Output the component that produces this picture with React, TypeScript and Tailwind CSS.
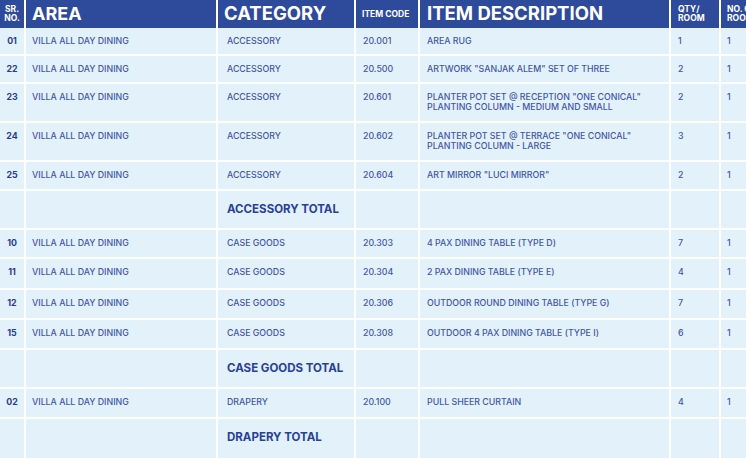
const cols = 'grid grid-cols-[24px_190px_136px_62px_249px_48px_1fr] gap-x-[2px]';

type Row = {
    sr?: string;
    area?: string;
    category?: string;
    code?: string;
    desc?: string[];
    qty?: string;
    rooms?: string;
    total?: string;
    h: string;
};

const rows: Row[] = [
    { sr: '01', area: 'VILLA ALL DAY DINING', category: 'ACCESSORY', code: '20.001', desc: ['AREA RUG'], qty: '1', rooms: '1', h: 'h-[26px]' },
    { sr: '22', area: 'VILLA ALL DAY DINING', category: 'ACCESSORY', code: '20.500', desc: ['ARTWORK "SANJAK ALEM" SET OF THREE'], qty: '2', rooms: '1', h: 'h-[26px]' },
    { sr: '23', area: 'VILLA ALL DAY DINING', category: 'ACCESSORY', code: '20.601', desc: ['PLANTER POT SET @ RECEPTION "ONE CONICAL"', 'PLANTING COLUMN - MEDIUM AND SMALL'], qty: '2', rooms: '1', h: 'h-[37px]' },
    { sr: '24', area: 'VILLA ALL DAY DINING', category: 'ACCESSORY', code: '20.602', desc: ['PLANTER POT SET @ TERRACE "ONE CONICAL"', 'PLANTING COLUMN - LARGE'], qty: '3', rooms: '1', h: 'h-[37px]' },
    { sr: '25', area: 'VILLA ALL DAY DINING', category: 'ACCESSORY', code: '20.604', desc: ['ART MIRROR "LUCI MIRROR"'], qty: '2', rooms: '1', h: 'h-[27px]' },
    { total: 'ACCESSORY TOTAL', h: 'h-[37px]' },
    { sr: '10', area: 'VILLA ALL DAY DINING', category: 'CASE GOODS', code: '20.303', desc: ['4 PAX DINING TABLE (TYPE D)'], qty: '7', rooms: '1', h: 'h-[27px]' },
    { sr: '11', area: 'VILLA ALL DAY DINING', category: 'CASE GOODS', code: '20.304', desc: ['2 PAX DINING TABLE (TYPE E)'], qty: '4', rooms: '1', h: 'h-[29px]' },
    { sr: '12', area: 'VILLA ALL DAY DINING', category: 'CASE GOODS', code: '20.306', desc: ['OUTDOOR ROUND DINING TABLE (TYPE G)'], qty: '7', rooms: '1', h: 'h-[28px]' },
    { sr: '15', area: 'VILLA ALL DAY DINING', category: 'CASE GOODS', code: '20.308', desc: ['OUTDOOR 4 PAX DINING TABLE (TYPE I)'], qty: '6', rooms: '1', h: 'h-[28px]' },
    { total: 'CASE GOODS TOTAL', h: 'h-[37px]' },
    { sr: '02', area: 'VILLA ALL DAY DINING', category: 'DRAPERY', code: '20.100', desc: ['PULL SHEER CURTAIN'], qty: '4', rooms: '1', h: 'h-[28px]' },
    { total: 'DRAPERY TOTAL', h: 'h-[40px]' }
];

const base = 'bg-[#e3f1fb] pt-[8px] text-[8.8px] leading-[10px] whitespace-nowrap overflow-hidden';
const cell = `${base} font-medium text-[#4457a6]`;

export default function App() {
    return (
        <div className="w-[746px] h-[458px] overflow-hidden bg-white font-['Inter',sans-serif]">
            <div className="w-[760px] flex flex-col gap-y-[2px]">
                {/* Header */}
                <div className={`${cols} h-[26px]`}>
                    <div className="bg-[#2e4a9b] flex flex-col justify-center items-center text-white font-bold text-[8.5px] leading-[8.5px]">
                        <span>SR.</span>
                        <span>NO.</span>
                    </div>
                    <div className="bg-[#2e4a9b] flex items-center pl-[6px] text-white font-bold text-[18px]">AREA</div>
                    <div className="bg-[#2e4a9b] flex items-center pl-[6px] text-white font-bold text-[18.5px]">CATEGORY</div>
                    <div className="bg-[#2e4a9b] flex items-center pl-[6px] text-white font-bold text-[8.5px] whitespace-nowrap">ITEM CODE</div>
                    <div className="bg-[#2e4a9b] flex items-center pl-[7px] text-white font-bold text-[18.5px]">ITEM DESCRIPTION</div>
                    <div className="bg-[#2e4a9b] flex flex-col justify-center pl-[7px] text-white font-bold text-[8.5px] leading-[8.5px]">
                        <span>QTY/</span>
                        <span>ROOM</span>
                    </div>
                    <div className="bg-[#2e4a9b] flex flex-col justify-center pl-[6px] text-white font-bold text-[8.5px] leading-[8.5px] whitespace-nowrap">
                        <span>NO. OF</span>
                        <span>ROOMS</span>
                    </div>
                </div>

                {/* Body */}
                {rows.map((r, i) =>
                    r.total ? (
                        <div key={i} className={`${cols} ${r.h}`}>
                            <div className="bg-[#e3f1fb]" />
                            <div className="bg-[#e3f1fb]" />
                            <div className="bg-[#e3f1fb] pt-[11px] pl-[9px] text-[11.5px] leading-[14px] font-bold text-[#29409a] whitespace-nowrap">
                                {r.total}
                            </div>
                            <div className="bg-[#e3f1fb]" />
                            <div className="bg-[#e3f1fb]" />
                            <div className="bg-[#e3f1fb]" />
                            <div className="bg-[#e3f1fb]" />
                        </div>
                    ) : (
                        <div key={i} className={`${cols} ${r.h}`}>
                            <div className={`${base} text-center font-bold text-[#2a3d8f]`}>{r.sr}</div>
                            <div className={`${cell} pl-[6px]`}>{r.area}</div>
                            <div className={`${cell} pl-[9px]`}>{r.category}</div>
                            <div className={`${cell} pl-[7px]`}>{r.code}</div>
                            <div className={`${cell} pl-[7px]`}>
                                {r.desc?.map((d) => (
                                    <div key={d}>{d}</div>
                                ))}
                            </div>
                            <div className={`${cell} pl-[7px]`}>{r.qty}</div>
                            <div className={`${cell} pl-[6px]`}>{r.rooms}</div>
                        </div>
                    )
                )}
            </div>
        </div>
    );
}
